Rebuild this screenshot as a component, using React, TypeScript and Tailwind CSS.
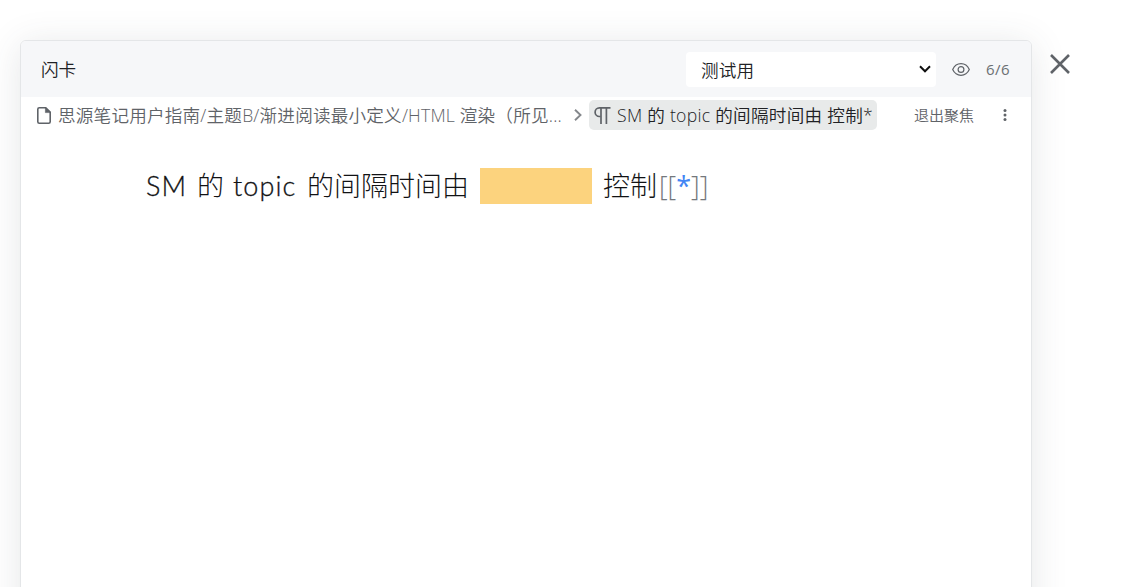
import React from 'react';

interface IconProps {
  className?: string;
}

const FileIcon: React.FC<IconProps> = ({ className }) => (
  <svg className={className} viewBox="0 0 14 17" fill="none" stroke="currentColor" strokeWidth="1.6">
    <path d="M2.3 0.8H8.8L13.2 5.2V14.7Q13.2 16.2 11.7 16.2H2.3Q0.8 16.2 0.8 14.7V2.3Q0.8 0.8 2.3 0.8Z" />
    <path d="M8.4 0.8L13.2 5.6H8.4Z" fill="currentColor" strokeWidth="0.6" />
  </svg>
);

const ParagraphIcon: React.FC<IconProps> = ({ className }) => (
  <svg className={className} viewBox="0 0 17 17" fill="none" stroke="currentColor" strokeWidth="1.7">
    <path d="M16.5 0.9H5.4A4.3 4.3 0 0 0 5.4 9.5H6.6" />
    <path d="M7 1V17M12.4 1V17" />
  </svg>
);

const EyeIcon: React.FC<IconProps> = ({ className }) => (
  <svg className={className} viewBox="0 0 18 13" fill="none" stroke="currentColor" strokeWidth="1.2">
    <path d="M0.7 6.5C2.4 2.8 5.4 0.7 9 0.7S15.6 2.8 17.3 6.5C15.6 10.2 12.6 12.3 9 12.3S2.4 10.2 0.7 6.5Z" />
    <circle cx="9" cy="6.5" r="2.9" />
  </svg>
);

const Flashcard: React.FC = () => {
  return (
    <div className="flex h-[587px] items-start overflow-hidden bg-white pl-5 pt-10 font-['Open_Sans','Noto_Sans_CJK_SC',sans-serif] font-[350] text-[#202124]">
      {/* Dialog */}
      <div className="h-[640px] w-[1012px] shrink-0 overflow-hidden rounded-md border border-[#e4e6e8] bg-white shadow-[0_4px_36px_rgba(60,70,80,0.13)]">
        <header className="flex h-14 items-center bg-[#f6f7f9] pl-5 pr-5 text-[17.6px]">
          <span className="whitespace-nowrap">闪卡</span>
          <div className="ml-auto flex h-[35px] w-[250px] items-center justify-between rounded bg-white pl-[15px] pr-[5px]">
            <span className="mt-0.5 whitespace-nowrap tracking-[0.2px]">测试用</span>
            <svg className="h-2 w-3 text-[#111]" viewBox="0 0 12 8" fill="none" stroke="currentColor" strokeWidth="2">
              <path d="M1 1.3L6 6.3L11 1.3" />
            </svg>
          </div>
          <EyeIcon className="ml-4 h-[13px] w-[18px] text-[#5f6368]" />
          <span className="ml-4 w-[25px] whitespace-nowrap text-[15px] font-normal tracking-[0.5px] text-[#6b6f73]">6/6</span>
        </header>

        {/* Breadcrumb */}
        <nav className="flex h-9 items-center pl-4 pr-6 text-[17.6px] text-[#5f6368]">
          <FileIcon className="h-[17px] w-[14px] shrink-0" />
          <span className="ml-[7px] w-[505px] whitespace-nowrap tracking-[0.2px]">
            思源笔记用户指南/主题B/渐进阅读最小定义/HTML 渲染（所见...
          </span>
          <svg className="ml-[11px] h-3 w-2 shrink-0 text-[#85888c]" viewBox="0 0 8 12" fill="none" stroke="currentColor" strokeWidth="1.9">
            <path d="M1 0.8L6.5 6L1 11.2" />
          </svg>
          <div className="ml-[7px] flex h-[30px] w-[288px] shrink-0 items-center rounded-[5px] bg-[#e8eaea] pl-[5px]">
            <ParagraphIcon className="h-[17px] w-[17px] shrink-0" />
            <span className="ml-1.5 whitespace-nowrap tracking-[0.28px] text-[#202124]">SM 的 topic 的间隔时间由 控制*</span>
          </div>
          <span className="ml-auto whitespace-nowrap text-[15px]">退出聚焦</span>
          <svg className="ml-[29px] h-3 w-1 shrink-0" viewBox="0 0 4 12" fill="currentColor">
            <circle cx="2" cy="1.5" r="1.5" />
            <circle cx="2" cy="6" r="1.5" />
            <circle cx="2" cy="10.5" r="1.5" />
          </svg>
        </nav>

        {/* Card */}
        <div className="flex items-center whitespace-nowrap pl-[125px] pt-[35px] font-['Lato','Noto_Sans_CJK_SC',sans-serif] text-[27px] font-light leading-9 text-[#111214]">
          <span className="w-[51px] tracking-[1px] [-webkit-text-stroke:0.3px]">SM</span>
          <span className="w-[36px]">的</span>
          <span className="w-[74px] tracking-[1.1px] [-webkit-text-stroke:0.3px]">topic</span>
          <span className="w-[173px]">的间隔时间由</span>
          <span className="h-9 w-28 bg-[#fcd37e]"></span>
          <span className="ml-[11px] w-[56px]">控制</span>
          <span className="font-['Open_Sans'] text-[#74787d]">[[</span>
          <span className="font-['Open_Sans'] font-normal text-[#4285f4]">*</span>
          <span className="font-['Open_Sans'] text-[#74787d]">]]</span>
        </div>
      </div>

      <button className="ml-[18px] mt-3.5 text-[#5f6368]" aria-label="关闭">
        <svg className="h-5 w-5" viewBox="0 0 20 20" fill="none" stroke="currentColor" strokeWidth="2.6">
          <path d="M1 1L19 19M19 1L1 19" />
        </svg>
      </button>
    </div>
  );
};

export default Flashcard;
